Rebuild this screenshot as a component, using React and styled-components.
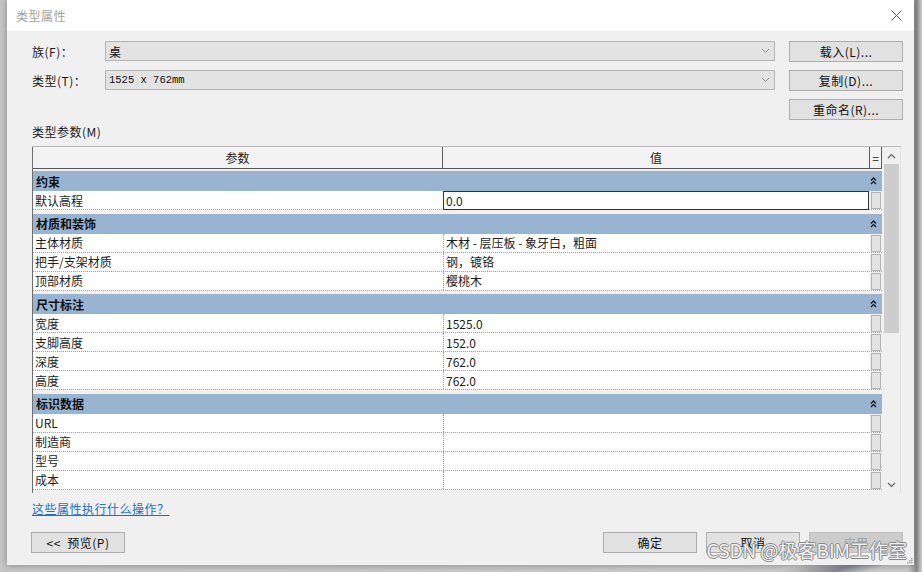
import styled, { createGlobalStyle } from 'styled-components';

const GlobalStyle = createGlobalStyle`
  html, body {
    margin: 0;
    padding: 0;
  }
  body {
    background: #c8c8c8;
    font-family: "Noto Sans CJK SC", "Liberation Sans", sans-serif;
    overflow: hidden;
  }
`;

const Desktop = styled.div`
  width: 922px;
  height: 572px;
  padding-left: 7px;
  box-sizing: border-box;
  background:
    linear-gradient(160deg, transparent 60%, rgba(70, 80, 100, 0.55) 75%, transparent 85%) right bottom / 330px 10px no-repeat,
    linear-gradient(90deg, #c6c6c6 0%, #cbcbcb 98.5%, #8a8a8a 99.4%, #d0d0d0 100%);
`;

const Dialog = styled.div`
  position: relative;
  width: 907px;
  height: 565px;
  background: #f0f0f0;
  display: flex;
  flex-direction: column;
  box-shadow: 0 0 7px rgba(0, 0, 0, 0.35);
`;

const TitleBar = styled.div`
  height: 31px;
  background: #ffffff;
  display: flex;
  align-items: center;
  justify-content: space-between;
  padding: 0 12px 0 9px;
  h1 {
    margin: 0;
    font-size: 12px;
    font-weight: 400;
    color: #a2a2a2;
    letter-spacing: 0.5px;
  }
`;

const Body = styled.div`
  flex: 1;
  display: flex;
  flex-direction: column;
  padding: 10px 11px 12px 25px;
`;

const TopGrid = styled.div`
  display: grid;
  grid-template-columns: 59px 670px 114px;
  grid-template-rows: 20px 20px 20px;
  column-gap: 14px;
  row-gap: 9px;
  align-items: center;
`;

const FieldLabel = styled.span`
  font-size: 12px;
  color: #1a1a1a;
  letter-spacing: 0.5px;
  white-space: nowrap;
`;

const Combo = styled.div`
  height: 20px;
  box-sizing: border-box;
  background: #e3e3e3;
  border: 1px solid #b4b4b4;
  display: flex;
  align-items: center;
  justify-content: space-between;
  padding: 0 4px 0 3px;
  font-size: 12px;
  color: #111;
  span.mono {
    font-family: "Liberation Mono", monospace;
    font-size: 10.5px;
  }
`;

const Button = styled.button`
  height: 21px;
  width: ${(p) => (p.$w ? `${p.$w}px` : '100%')};
  box-sizing: border-box;
  background: ${(p) => (p.disabled ? '#cccccc' : '#e1e1e1')};
  border: 1px solid ${(p) => (p.disabled ? '#bfbfbf' : '#adadad')};
  color: ${(p) => (p.disabled ? '#a0a0a0' : '#111')};
  font-family: "Noto Sans CJK SC", sans-serif;
  font-size: 12px;
  letter-spacing: 0.5px;
  padding: 0;
  display: flex;
  align-items: center;
  justify-content: center;
  cursor: default;
`;

const SectionLabel = styled.div`
  margin-top: 6px;
  font-size: 12px;
  line-height: 14px;
  color: #1a1a1a;
  letter-spacing: 0.5px;
`;

const TableWrap = styled.div`
  margin-top: 7px;
  width: 869px;
  height: 347px;
  display: flex;
  border-top: 1px solid #b9b9b9;
  box-sizing: border-box;
`;

const Grid = styled.div`
  width: 851px;
  border-left: 1px solid #6e6e6e;
  background: #f0f0f0;
  overflow: hidden;
  display: flex;
  flex-direction: column;
`;

const Header = styled.div`
  display: grid;
  grid-template-columns: 410px 427px 1fr;
  height: 21px;
  flex-shrink: 0;
  background: #f3f3f3;
  border-bottom: 1px solid #5a5a5a;
  font-size: 12px;
  color: #222;
  div {
    display: flex;
    align-items: center;
    justify-content: center;
    border-right: 1px solid #5a5a5a;
  }
`;

const Group = styled.div`
  margin-top: ${(p) => (p.$first ? 2 : 3.5)}px;
  height: 20px;
  flex-shrink: 0;
  background: #99b4d1;
  display: flex;
  align-items: center;
  justify-content: space-between;
  padding: 0 5px 0 3px;
  font-size: 12px;
  font-weight: 700;
  color: #111;
`;

const Row = styled.div`
  display: grid;
  grid-template-columns: 410px 427px 1fr;
  height: 19px;
  flex-shrink: 0;
  box-sizing: border-box;
  border-bottom: 1px dotted #a5a5a5;
  font-size: 12px;
  color: #1c1c1c;
`;

const Cell = styled.div`
  display: flex;
  align-items: center;
  padding-left: 2px;
  background: #ffffff;
  white-space: nowrap;
  overflow: hidden;
  ${(p) => p.$value && 'border-left: 1px dotted #a5a5a5;'}
  ${(p) =>
    p.$editing &&
    'border: 1px solid #333; margin: 0 1px -1px 0; box-sizing: border-box;'}
`;

const CellBtn = styled.div`
  background: #f0f0f0;
  display: flex;
  align-items: stretch;
  padding: 1px 1px 0 1px;
  span {
    flex: 1;
    background: #e3e3e3;
    border: 1px solid #b3b3b3;
  }
`;

const Scrollbar = styled.div`
  width: 18px;
  background: #f0f0f0;
  border-right: 1px solid #e0e0e0;
  display: flex;
  flex-direction: column;
  align-items: center;
`;

const ScrollArrow = styled.div`
  height: 17px;
  display: flex;
  align-items: center;
  justify-content: center;
`;

const Thumb = styled.div`
  width: 15px;
  height: 169px;
  background: #cdcdcd;
`;

const Spacer = styled.div`
  flex: 1;
`;

const Link = styled.a`
  margin-top: 7px;
  font-size: 12px;
  color: #1e6fc8;
  text-decoration: underline;
  letter-spacing: 0.5px;
  align-self: flex-start;
`;

const Footer = styled.div`
  margin-top: auto;
  display: flex;
  justify-content: space-between;
  align-items: flex-end;
  margin-left: -1px;
`;

const ButtonGroup = styled.div`
  display: flex;
  gap: 9px;
`;

const Watermark = styled.div`
  position: absolute;
  right: 7px;
  bottom: 3px;
  font-size: 19px;
  line-height: 24px;
  color: rgba(250, 250, 250, 0.92);
  text-shadow:
    1px 0 0 #8a8a8a,
    -1px 0 0 #8a8a8a,
    0 1px 0 #8a8a8a,
    0 -1px 0 #8a8a8a;
  pointer-events: none;
`;

const Grip = styled.svg`
  position: absolute;
  right: 1px;
  bottom: 1px;
`;

const Chevron = () => (
  <svg width="9" height="6" viewBox="0 0 9 6">
    <path d="M1 1 L4.5 4.5 L8 1" fill="none" stroke="#8a8a8a" strokeWidth="1" />
  </svg>
);

const Collapse = () => (
  <svg width="7" height="8" viewBox="0 0 7 8">
    <path d="M1 3.5 L3.5 1 L6 3.5 M1 7 L3.5 4.5 L6 7" fill="none" stroke="#1a1a1a" strokeWidth="1.3" />
  </svg>
);

const groups = [
  {
    name: '约束',
    rows: [{ k: '默认高程', v: '0.0', editing: true }],
  },
  {
    name: '材质和装饰',
    rows: [
      { k: '主体材质', v: '木材 - 层压板 - 象牙白，粗面' },
      { k: '把手/支架材质', v: '钢，镀铬' },
      { k: '顶部材质', v: '樱桃木' },
    ],
  },
  {
    name: '尺寸标注',
    rows: [
      { k: '宽度', v: '1525.0' },
      { k: '支脚高度', v: '152.0' },
      { k: '深度', v: '762.0' },
      { k: '高度', v: '762.0' },
    ],
  },
  {
    name: '标识数据',
    rows: [
      { k: 'URL', v: '' },
      { k: '制造商', v: '' },
      { k: '型号', v: '' },
      { k: '成本', v: '' },
    ],
  },
];

const App = () => {
  return (
    <>
      <GlobalStyle />
      <Desktop>
        <Dialog>
          <TitleBar>
            <h1>类型属性</h1>
            <svg width="11" height="11" viewBox="0 0 11 11">
              <path d="M0.5 0.5 L10.5 10.5 M10.5 0.5 L0.5 10.5" stroke="#555" strokeWidth="1" />
            </svg>
          </TitleBar>
          <Body>
            <TopGrid>
              <FieldLabel>族(F)：</FieldLabel>
              <Combo>
                <span>桌</span>
                <Chevron />
              </Combo>
              <Button>载入(L)...</Button>

              <FieldLabel>类型(T)：</FieldLabel>
              <Combo>
                <span className="mono">1525 x 762mm</span>
                <Chevron />
              </Combo>
              <Button>复制(D)...</Button>

              <span />
              <span />
              <Button>重命名(R)...</Button>
            </TopGrid>

            <SectionLabel>类型参数(M)</SectionLabel>

            <TableWrap>
              <Grid>
                <Header>
                  <div>参数</div>
                  <div>值</div>
                  <div>=</div>
                </Header>
                {groups.map((g, gi) => (
                  <div key={g.name} style={{ display: 'contents' }}>
                    <Group $first={gi === 0}>
                      <span>{g.name}</span>
                      <Collapse />
                    </Group>
                    {g.rows.map((r) => (
                      <Row key={r.k}>
                        <Cell>{r.k}</Cell>
                        <Cell $value $editing={r.editing}>
                          {r.v}
                        </Cell>
                        <CellBtn>
                          <span />
                        </CellBtn>
                      </Row>
                    ))}
                  </div>
                ))}
              </Grid>
              <Scrollbar>
                <ScrollArrow>
                  <svg width="9" height="6" viewBox="0 0 9 6">
                    <path d="M1 5 L4.5 1.5 L8 5" fill="none" stroke="#606060" strokeWidth="1.2" />
                  </svg>
                </ScrollArrow>
                <Thumb />
                <Spacer />
                <ScrollArrow>
                  <svg width="9" height="6" viewBox="0 0 9 6">
                    <path d="M1 1 L4.5 4.5 L8 1" fill="none" stroke="#606060" strokeWidth="1.2" />
                  </svg>
                </ScrollArrow>
              </Scrollbar>
            </TableWrap>

            <Link>这些属性执行什么操作？</Link>

            <Footer>
              <Button $w={94}>&lt;&lt;&nbsp;&nbsp;预览(P)</Button>
              <ButtonGroup>
                <Button $w={94}>确定</Button>
                <Button $w={94}>取消</Button>
                <Button $w={94} disabled>
                  应用
                </Button>
              </ButtonGroup>
            </Footer>
          </Body>
          <Watermark>CSDN @极客BIM工作室</Watermark>
          <Grip width="7" height="7" viewBox="0 0 7 7">
            <rect x="5" y="1" width="1.5" height="1.5" fill="#a8a8a8" />
            <rect x="3" y="3" width="1.5" height="1.5" fill="#a8a8a8" />
            <rect x="5" y="3" width="1.5" height="1.5" fill="#a8a8a8" />
            <rect x="1" y="5" width="1.5" height="1.5" fill="#a8a8a8" />
            <rect x="3" y="5" width="1.5" height="1.5" fill="#a8a8a8" />
            <rect x="5" y="5" width="1.5" height="1.5" fill="#a8a8a8" />
          </Grip>
        </Dialog>
      </Desktop>
    </>
  );
};

export default App;
